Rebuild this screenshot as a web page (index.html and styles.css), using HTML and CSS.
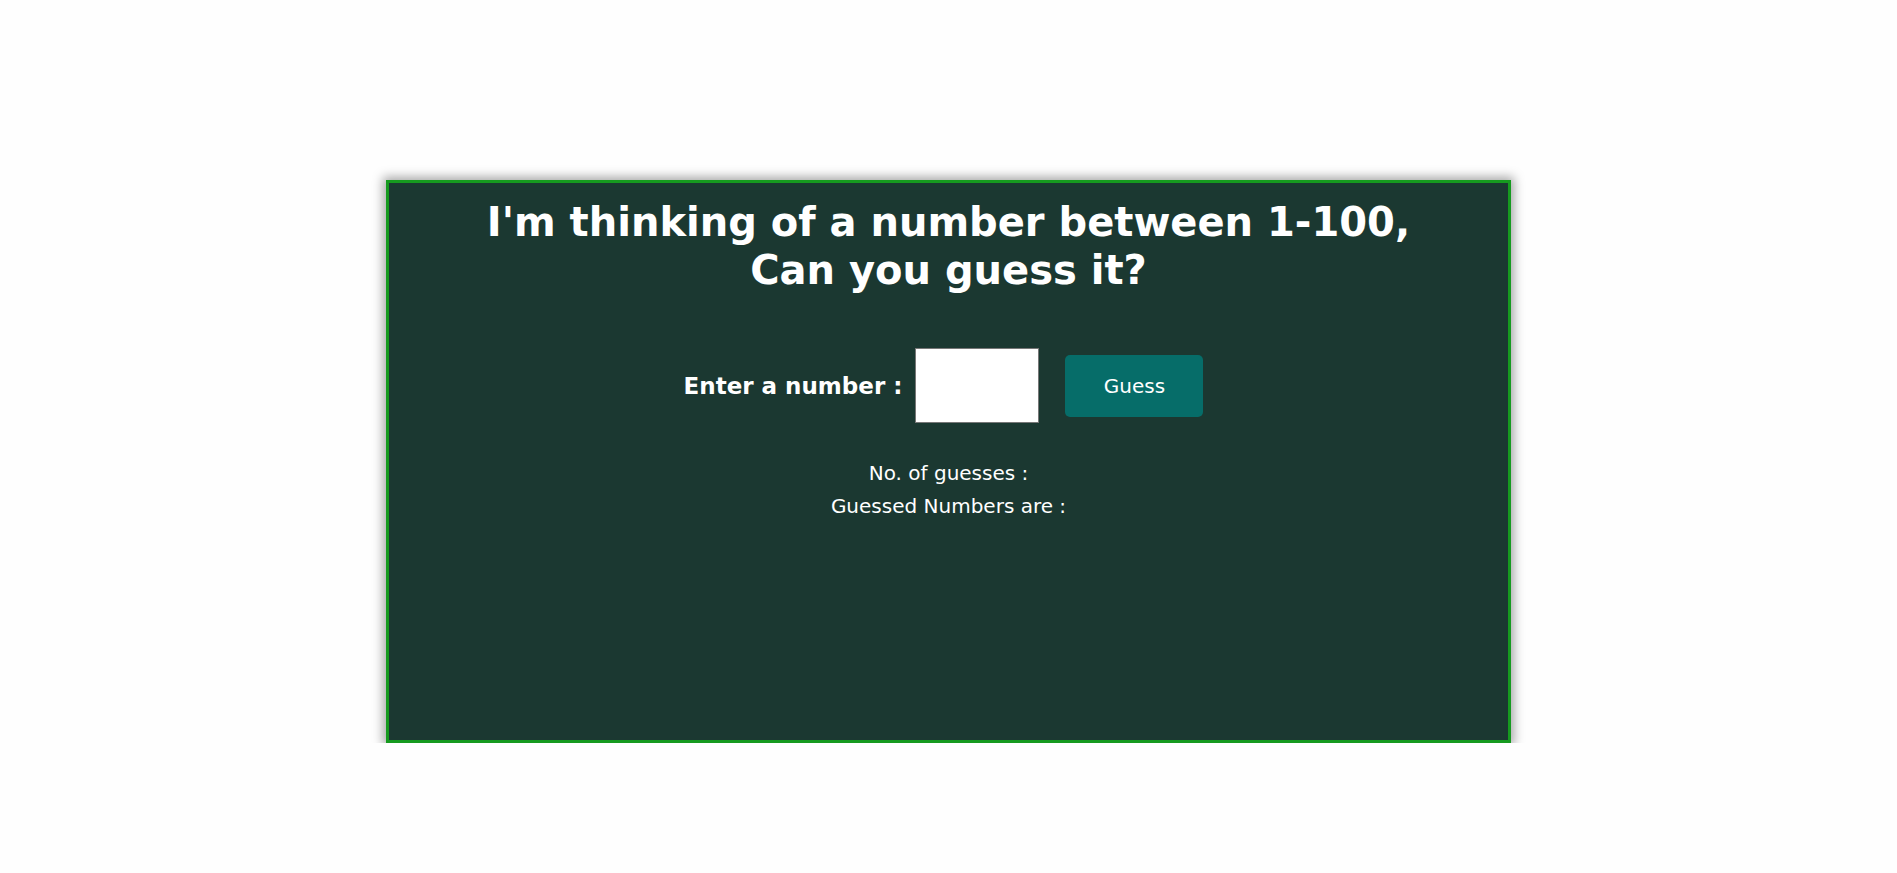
FILE: index.html
```html
<!DOCTYPE html>
<html>
<head>
<meta charset="utf-8">
<title>Guess the Number</title>
<link rel="stylesheet" href="styles.css">
</head>
<body>
<div class="game">
  <h1 class="title">I'm thinking of a number between 1-100,<br>Can you guess it?</h1>
  <div class="form">
    <label class="label" for="guess">Enter a number :</label>
    <input class="field" id="guess" type="text">
    <button class="btn">Guess</button>
  </div>
  <div class="status">
    <p class="line">No. of guesses :</p>
    <p class="line">Guessed Numbers are :</p>
  </div>
</div>
</body>
</html>
```
FILE: styles.css
```css
html, body {
  margin: 0;
  padding: 0;
  background: #fefefe;
}
body {
  font-family: "DejaVu Sans", Verdana, sans-serif;
  padding-top: 180px;
}
.game {
  width: 1119px;
  height: 557px;
  margin: 0 auto;
  background: #1b3831;
  border: 3px solid #169a1f;
  box-shadow: 0 0 10px 3px rgba(0,0,0,0.35);
  color: #ffffff;
  text-align: center;
  box-sizing: content-box;
  overflow: hidden;
}
.title {
  margin: 15px 0 0;
  font-size: 40px;
  line-height: 48px;
  font-weight: bold;
}
.form {
  display: flex;
  justify-content: center;
  align-items: center;
  margin-top: 54px;
}
.label {
  font-size: 23px;
  font-weight: bold;
  margin-right: 13px;
}
.field {
  width: 122px;
  height: 73px;
  border: 1px solid #777;
  padding: 0;
  margin: 0 26px 0 0;
  background: #fff;
}
.btn {
  width: 138px;
  height: 62px;
  border: none;
  border-radius: 5px;
  background: #066d69;
  color: #fff;
  font-family: "DejaVu Sans", Verdana, sans-serif;
  font-size: 20px;
  margin-right: 10px;
}
.status {
  margin-top: 34px;
}
.line {
  margin: 0;
  font-size: 20px;
  line-height: 33px;
}
```
